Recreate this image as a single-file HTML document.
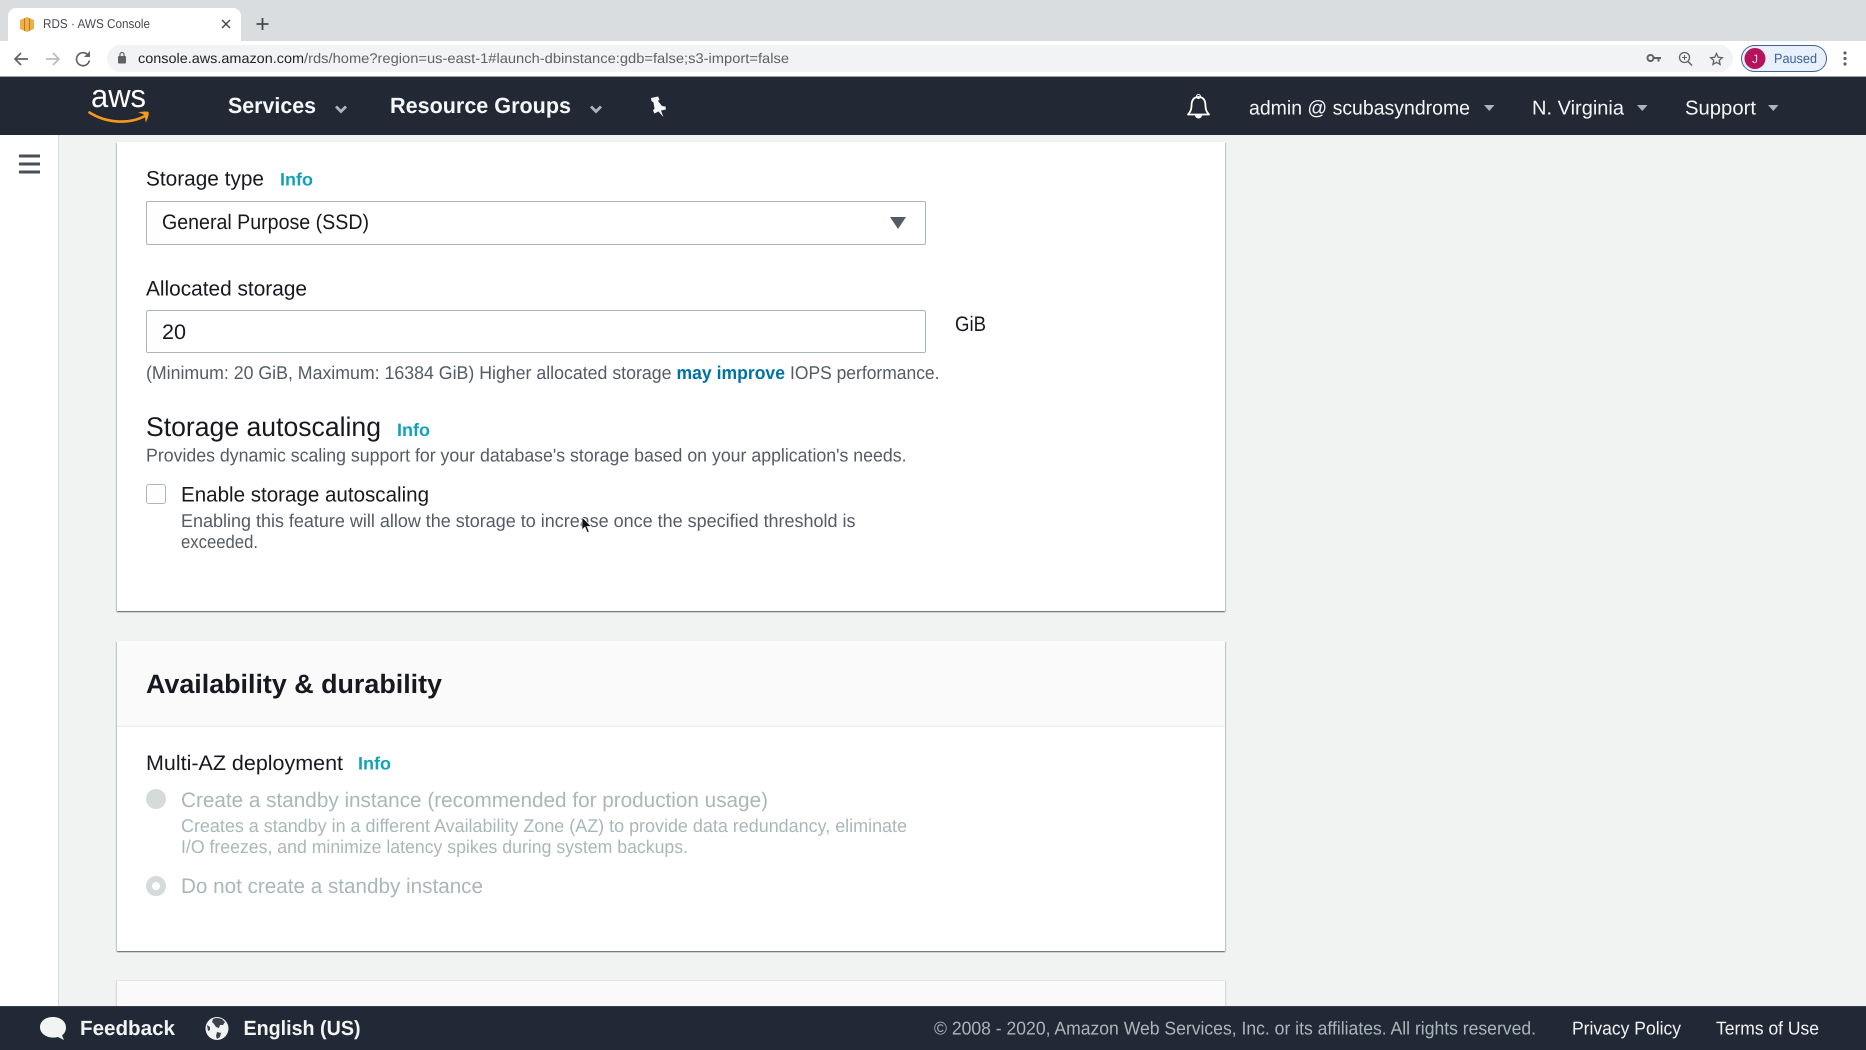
<!DOCTYPE html>
<html lang="en">
<head>
<meta charset="utf-8">
<title>RDS · AWS Console</title>
<style>
html,body{margin:0;padding:0;width:1866px;height:1050px;overflow:hidden;background:#f1f2f2;font-family:"Liberation Sans",sans-serif}
.b{position:absolute;box-sizing:border-box}
svg{position:absolute;left:0;top:0}
text{font-family:"Liberation Sans",sans-serif;text-rendering:geometricPrecision;white-space:pre}
.bd{font-weight:700}
</style>
</head>
<body>
<!-- chrome -->
<div class="b" style="left:0;top:0;width:1866px;height:41px;background:#dadde0"></div>
<div class="b" style="left:8px;top:8px;width:233px;height:34px;background:#fff;border-radius:8px 8px 0 0"></div>
<div class="b" style="left:0;top:41px;width:1866px;height:35px;background:#fff"></div>
<div class="b" style="left:107px;top:45px;width:1626px;height:27px;background:#f1f3f4;border-radius:14px"></div>
<div class="b" style="left:1741px;top:45px;width:86px;height:27px;background:#e8f0fe;border:1.5px solid #45618f;border-radius:14px"></div>
<!-- nav -->
<div class="b" style="left:0;top:76px;width:1866px;height:59px;background:#222935;border-top:1px solid #9aa0a6"></div>
<!-- sidebar -->
<div class="b" style="left:0;top:135px;width:59px;height:871px;background:#fff;border-right:1.5px solid #d5dbdb"></div>
<!-- panel 1 -->
<div class="b" style="left:117px;top:142px;width:1107.5px;height:469px;background:#fff;box-shadow:0 1px 1px 0 rgba(0,28,36,.5),1px 1px 1px 0 rgba(0,28,36,.15),-1px 1px 1px 0 rgba(0,28,36,.15)"></div>
<!-- panel 2 -->
<div class="b" style="left:117px;top:641px;width:1107.5px;height:310px;background:#fff;box-shadow:0 1px 1px 0 rgba(0,28,36,.5),1px 1px 1px 0 rgba(0,28,36,.15),-1px 1px 1px 0 rgba(0,28,36,.15)"></div>
<div class="b" style="left:117px;top:641px;width:1107.5px;height:86px;background:#fafafa;border-bottom:1px solid #eaeded"></div>
<!-- panel 3 -->
<div class="b" style="left:117px;top:981px;width:1107.5px;height:30px;background:#fafafa;box-shadow:1px 0 1px 0 rgba(0,28,36,.15),-1px 0 1px 0 rgba(0,28,36,.15)"></div>
<!-- form -->
<div class="b" style="left:146px;top:201px;width:780px;height:44px;background:#fff;border:1px solid #aab7b8;border-radius:2px"></div>
<div class="b" style="left:146px;top:310px;width:780px;height:43px;background:#fff;border:1px solid #aab7b8;border-radius:2px"></div>
<div class="b" style="left:146px;top:484px;width:20px;height:20px;background:#fff;border:1.5px solid #aab7b8;border-radius:3px"></div>
<div class="b" style="left:146px;top:789px;width:20px;height:20px;background:#d5dbdb;border-radius:50%"></div>
<div class="b" style="left:146px;top:876px;width:20px;height:20px;background:#fff;border:6px solid #d5dbdb;border-radius:50%"></div>
<!-- footer -->
<div class="b" style="left:0;top:1006px;width:1866px;height:44px;background:#212936;border-top:1px solid #3a3f47"></div>

<svg width="1866" height="1050" viewBox="0 0 1866 1050" xmlns="http://www.w3.org/2000/svg">
  <!-- tab -->
  <path d="M20 20l7-3 7 3v9l-7 3-7-3z" fill="#eeb04a"/>
  <path d="M24.500 18.500v12.500M29.500 18.500v12.500" stroke="#b97a1c" stroke-width="1"/>
  <text x="43" y="28" font-size="12.800" fill="#45484d" textLength="107" lengthAdjust="spacingAndGlyphs">RDS · AWS Console</text>
  <path d="M222 20l8 8M230 20l-8 8" stroke="#45484d" stroke-width="1.500"/>
  <path d="M262.500 18v12M256.500 24h12" stroke="#45484d" stroke-width="1.800"/>
  <!-- toolbar -->
  <path d="M28 59H16M21 53l-6 6 6 6" fill="none" stroke="#5f6368" stroke-width="1.700"/>
  <path d="M46 59h12M53 53l6 6-6 6" fill="none" stroke="#b9bcc0" stroke-width="1.700"/>
  <path d="M88 55a6.500 6.500 0 1 0 1.400 5.500" fill="none" stroke="#5f6368" stroke-width="1.700"/>
  <path d="M90 51v6h-6z" fill="#5f6368"/>
  <rect x="118" y="56" width="8" height="7.500" rx="1" fill="#5f6368"/>
  <path d="M120 56v-1.500a2 2 0 0 1 4 0V56" fill="none" stroke="#5f6368" stroke-width="1.200"/>
  <text x="138" y="63" font-size="14" fill="#23252a" textLength="166" lengthAdjust="spacingAndGlyphs">console.aws.amazon.com</text>
  <text x="304" y="63" font-size="14" fill="#5f6368" textLength="485" lengthAdjust="spacingAndGlyphs">/rds/home?region=us-east-1#launch-dbinstance:gdb=false;s3-import=false</text>
  <circle cx="1650.500" cy="58" r="3" fill="none" stroke="#5f6368" stroke-width="2"/>
  <path d="M1653 57h8v2h-1.500v2.500h-2V59H1653z" fill="#5f6368"/>
  <circle cx="1684.500" cy="57.500" r="5" fill="none" stroke="#5f6368" stroke-width="1.300"/>
  <path d="M1688 61.500l4 4" stroke="#5f6368" stroke-width="1.500"/>
  <path d="M1684.500 55v5M1682 57.500h5" stroke="#5f6368" stroke-width="1.100"/>
  <path d="M1716.500 53.500l1.700 3.800 4.100.4-3.100 2.700.9 4-3.600-2.100-3.600 2.100.9-4-3.100-2.700 4.100-.4z" fill="none" stroke="#5f6368" stroke-width="1.300"/>
  <circle cx="1755" cy="58.500" r="10.500" fill="#b5135b"/>
  <text x="1755" y="63" font-size="12" fill="#f4d9e5" text-anchor="middle">J</text>
  <text x="1774" y="63" font-size="13.500" fill="#3d5f9b" textLength="43" lengthAdjust="spacingAndGlyphs">Paused</text>
  <circle cx="1845" cy="53" r="1.600" fill="#5f6368"/><circle cx="1845" cy="58.500" r="1.600" fill="#5f6368"/><circle cx="1845" cy="64" r="1.600" fill="#5f6368"/>

  <!-- nav -->
  <text x="91" y="107" font-size="32" fill="#fff" textLength="55" lengthAdjust="spacingAndGlyphs">aws</text>
  <path d="M89.500 112.500C106 123 128 124.500 144 116.500" fill="none" stroke="#f7981d" stroke-width="2.600" stroke-linecap="round"/>
  <path d="M138 112.500c4-1 8.500-1.500 10.500-.5.800 2-.8 7-2.800 10.500-.3-3.500-.7-6-1.700-7.500-1.500-1.500-3.500-2-6-2.500z" fill="#f7981d"/>
  <text class="bd" x="228" y="113" font-size="22" fill="#f5f6f7" textLength="88" lengthAdjust="spacingAndGlyphs">Services</text>
  <path d="M336 106.500l5 5 5-5" fill="none" stroke="#aab7b8" stroke-width="2.800"/>
  <text class="bd" x="390" y="113" font-size="22" fill="#f5f6f7" textLength="181" lengthAdjust="spacingAndGlyphs">Resource Groups</text>
  <path d="M591 106.500l5 5 5-5" fill="none" stroke="#aab7b8" stroke-width="2.800"/>
  <path d="M651 98l7-1.500 1.500 3-1.500 1.500 4 5 3.500.5.500 3-5 1 2.500 6.500-5-5.500-4 2-1.500-3 1.500-2-1-6-2-1.500z" fill="#f5f6f7"/>
  <path d="M1198.500 94.500a2 2 0 0 1 0 4M1198.500 94.500a2 2 0 0 0 0 4" fill="none" stroke="#fff" stroke-width="1"/>
  <path d="M1198.500 97c-5.500 0-7 4.500-7 9 0 4-1.500 6.500-3.500 8.500h21c-2-2-3.500-4.500-3.500-8.500 0-4.500-1.500-9-7-9z" fill="none" stroke="#fff" stroke-width="1.800" stroke-linejoin="round"/>
  <path d="M1195 115a3.500 3.500 0 0 0 7 0z" fill="#fff"/>
  <text x="1249" y="114.500" font-size="20" fill="#f5f6f7" textLength="221" lengthAdjust="spacingAndGlyphs">admin @ scubasyndrome</text>
  <path d="M1484 105h10.500l-5.200 6z" fill="#aab7b8"/>
  <text x="1532" y="114.500" font-size="20" fill="#f5f6f7" textLength="92" lengthAdjust="spacingAndGlyphs">N. Virginia</text>
  <path d="M1637 105h10.500l-5.200 6z" fill="#aab7b8"/>
  <text x="1685" y="114.500" font-size="20" fill="#f5f6f7" textLength="71" lengthAdjust="spacingAndGlyphs">Support</text>
  <path d="M1768 105h10.500l-5.200 6z" fill="#aab7b8"/>

  <!-- sidebar icon -->
  <path d="M19 156h21M19 164h21M19 172h21" stroke="#4a5058" stroke-width="3"/>

  <!-- panel 1 text -->
  <text x="146" y="185.500" font-size="21" fill="#16191f" textLength="118" lengthAdjust="spacingAndGlyphs">Storage type</text>
  <text class="bd" x="280" y="185.500" font-size="18" fill="#12a1b8" textLength="33" lengthAdjust="spacingAndGlyphs">Info</text>
  <text x="162" y="229" font-size="21" fill="#16191f" textLength="207" lengthAdjust="spacingAndGlyphs">General Purpose (SSD)</text>
  <path d="M890 217h16l-8 12z" fill="#545b64"/>
  <text x="146" y="295.500" font-size="21" fill="#16191f" textLength="161" lengthAdjust="spacingAndGlyphs">Allocated storage</text>
  <text x="162" y="339" font-size="21" fill="#16191f" textLength="24" lengthAdjust="spacingAndGlyphs">20</text>
  <text x="955" y="331" font-size="21" fill="#16191f" textLength="31" lengthAdjust="spacingAndGlyphs">GiB</text>
  <text x="146" y="379" font-size="18.500" fill="#545b64" textLength="525.500" lengthAdjust="spacingAndGlyphs">(Minimum: 20 GiB, Maximum: 16384 GiB) Higher allocated storage</text>
  <text class="bd" x="676.500" y="379" font-size="18.500" fill="#0073a6" textLength="108.500" lengthAdjust="spacingAndGlyphs">may improve</text>
  <text x="790" y="379" font-size="18.500" fill="#545b64" textLength="149.500" lengthAdjust="spacingAndGlyphs">IOPS performance.</text>
  <text x="146" y="436" font-size="27" fill="#16191f" textLength="235" lengthAdjust="spacingAndGlyphs">Storage autoscaling</text>
  <text class="bd" x="397" y="436" font-size="18" fill="#12a1b8" textLength="33" lengthAdjust="spacingAndGlyphs">Info</text>
  <text x="146" y="461.500" font-size="18.500" fill="#545b64" textLength="760.500" lengthAdjust="spacingAndGlyphs">Provides dynamic scaling support for your database's storage based on your application's needs.</text>
  <text x="181" y="501.500" font-size="21" fill="#16191f" textLength="248" lengthAdjust="spacingAndGlyphs">Enable storage autoscaling</text>
  <text x="181" y="527" font-size="18.500" fill="#545b64" textLength="674.500" lengthAdjust="spacingAndGlyphs">Enabling this feature will allow the storage to increase once the specified threshold is</text>
  <text x="181" y="548" font-size="18.500" fill="#545b64" textLength="77" lengthAdjust="spacingAndGlyphs">exceeded.</text>
  <path d="M582 517v13l3-3 2.200 5.500 2-.8-2.200-5.300h4.200z" fill="#111" stroke="#fff" stroke-width=".7"/>

  <!-- panel 2 text -->
  <text class="bd" x="146" y="693" font-size="26.500" fill="#16191f" textLength="296" lengthAdjust="spacingAndGlyphs">Availability &amp; durability</text>
  <text x="146" y="770" font-size="21" fill="#16191f" textLength="197" lengthAdjust="spacingAndGlyphs">Multi-AZ deployment</text>
  <text class="bd" x="358" y="769.500" font-size="18" fill="#12a1b8" textLength="33" lengthAdjust="spacingAndGlyphs">Info</text>
  <text x="181" y="807" font-size="21" fill="#aab7b8" textLength="587" lengthAdjust="spacingAndGlyphs">Create a standby instance (recommended for production usage)</text>
  <text x="181" y="832" font-size="18.500" fill="#aab7b8" textLength="726" lengthAdjust="spacingAndGlyphs">Creates a standby in a different Availability Zone (AZ) to provide data redundancy, eliminate</text>
  <text x="181" y="853" font-size="18.500" fill="#aab7b8" textLength="507" lengthAdjust="spacingAndGlyphs">I/O freezes, and minimize latency spikes during system backups.</text>
  <text x="181" y="893" font-size="21" fill="#aab7b8" textLength="302" lengthAdjust="spacingAndGlyphs">Do not create a standby instance</text>

  <!-- footer -->
  <path d="M53 1017c7.500 0 13 4.500 13 10.500 0 3.500-1.500 6-4 8l2 4.500-6-3c-1.500.4-3.300.6-5 .6-7.500 0-13-4.700-13-10.300 0-6 5.500-10.300 13-10.300z" fill="#f2f3f3"/>
  <text class="bd" x="80" y="1035" font-size="20.500" fill="#f2f3f3" textLength="95" lengthAdjust="spacingAndGlyphs">Feedback</text>
  <circle cx="217" cy="1028.500" r="11.500" fill="#f2f3f3"/>
  <path d="M213 1019c3-1.500 6-1 9 0l3 3-2 3-3 0-1 3-3-1-2-3-2-2zM217 1032l4 1-1 4-3 2-1-3zM207 1025l3 2 0 3-2 1z" fill="#3b4350"/>
  <text class="bd" x="243.500" y="1035" font-size="20.500" fill="#f2f3f3" textLength="117" lengthAdjust="spacingAndGlyphs">English (US)</text>
  <text x="934" y="1034.500" font-size="18.500" fill="#aab7b8" textLength="602" lengthAdjust="spacingAndGlyphs">© 2008 - 2020, Amazon Web Services, Inc. or its affiliates. All rights reserved.</text>
  <text x="1572" y="1034.500" font-size="18.500" fill="#f2f3f3" textLength="109" lengthAdjust="spacingAndGlyphs">Privacy Policy</text>
  <text x="1716" y="1034.500" font-size="18.500" fill="#f2f3f3" textLength="103" lengthAdjust="spacingAndGlyphs">Terms of Use</text>
</svg>
</body>
</html>
